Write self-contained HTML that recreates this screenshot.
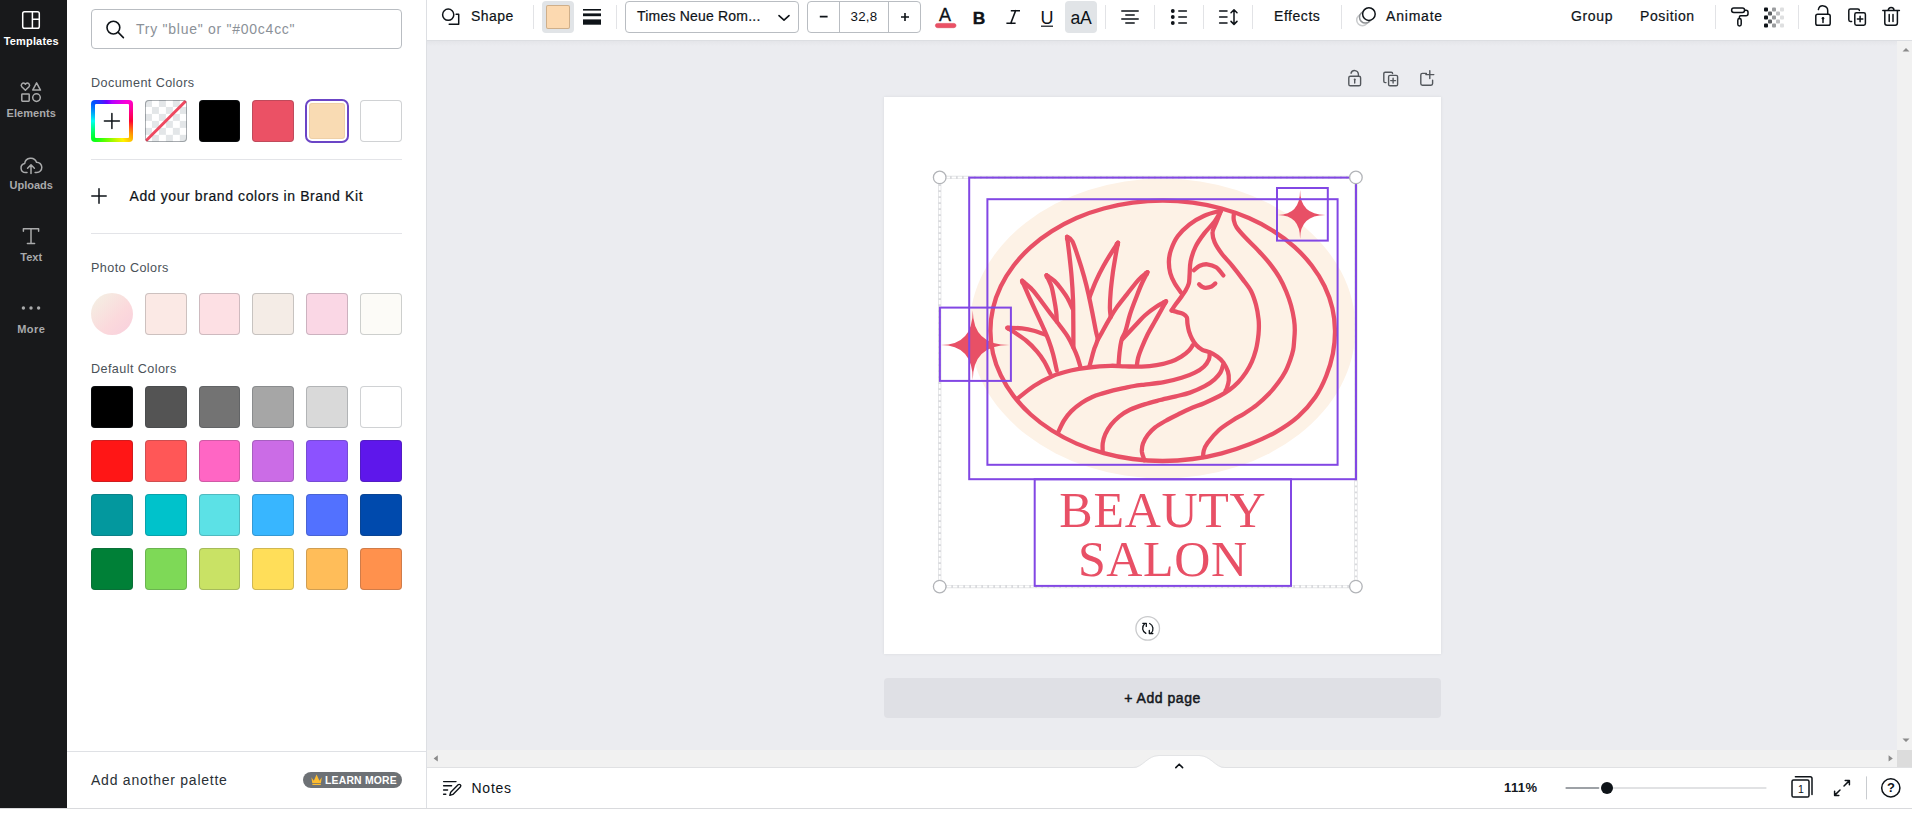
<!DOCTYPE html>
<html><head><meta charset="utf-8"><title>Beauty Salon Logo - Canva</title>
<style>
*{box-sizing:border-box;margin:0;padding:0}
html,body{width:1912px;height:813px;overflow:hidden;background:#fff;font-family:"Liberation Sans",sans-serif;color:#0e1318}
div,span,svg{position:absolute}
svg{overflow:visible}
#side{left:0;top:0;width:67px;height:808px;background:#18191b}
.sitem{left:0;width:62.5px;text-align:center;font-size:11px;line-height:14px;font-weight:bold;color:#a9aaab;white-space:nowrap}
.sitem.on{color:#fff}
#panel{left:67px;top:0;width:359px;height:808px;background:#fff}
.lbl{left:91px;font-size:12.6px;line-height:16px;color:#4a5158;white-space:nowrap;letter-spacing:.42px}
.sw{width:41.83px;height:41.83px;border-radius:4px;box-shadow:inset 0 0 0 1px rgba(40,50,60,.22)}
.hr{left:91px;width:311px;height:1px;background:#e3e4e8}
#toolbar{left:427px;top:0;width:1485px;height:40px;background:#fff}
.tb{font-size:14px;line-height:18px;color:#0e1318;top:7px;white-space:nowrap;-webkit-text-stroke:.2px #0e1318}
.vsep{top:5px;width:1px;height:24px;background:#e2e3e6}
#bottom{left:427px;top:768px;width:1485px;height:40px;background:#fff}
.pl{stroke:#8247e4;stroke-width:2;fill:none}
</style></head><body>

<div id="side"></div>
<div id="panel"></div>
<div style="left:426px;top:0;width:1px;height:808px;background:#dddfe3"></div>
<div style="left:0;top:808px;width:1912px;height:1px;background:#d9dadd"></div>
<div class="sitem on" style="top:34px;letter-spacing:0.18px">Templates</div>
<div class="sitem " style="top:106px;letter-spacing:0.05px">Elements</div>
<div class="sitem " style="top:178px;letter-spacing:0.02px">Uploads</div>
<div class="sitem " style="top:250px;letter-spacing:0.06px">Text</div>
<div class="sitem " style="top:322px;letter-spacing:0.44px">More</div>
<svg style="left:0;top:0" width="67" height="340">
<g stroke="#fff" stroke-width="1.5" fill="none"><rect x="22.7" y="11.7" width="16.6" height="16.6" rx="1.8"/><path d="M32.4 11.7v16.6M32.4 19.2h6.9"/></g>
<g stroke="#a9aaab" stroke-width="1.5" fill="none" stroke-linecap="round" stroke-linejoin="round"><path d="M25.4 90.3l-3.6-3.6a2.2 2.2 0 0 1 3.1-3.1l.5.5.5-.5a2.2 2.2 0 0 1 3.1 3.1z"/><path d="M36.6 82.9l3.9 7.2h-7.8z"/><rect x="21.8" y="94" width="7.4" height="7.2" rx=".6"/><circle cx="36.5" cy="97.6" r="3.8"/></g>
<g stroke="#a9aaab" stroke-width="1.5" fill="none" stroke-linecap="round" stroke-linejoin="round"><path d="M27 172.6h-1.4a4.6 4.6 0 0 1-.9-9.1 6.1 6.1 0 0 1 11.8-1.3 5.2 5.2 0 0 1 .2 10.4h-1.6"/><path d="M31 173.6v-8.6M27.6 168.2l3.4-3.4 3.4 3.4"/></g>
<g stroke="#a9aaab" stroke-width="1.5" fill="none" stroke-linecap="round" stroke-linejoin="round"><path d="M23.4 231.2v-2.4h15.2v2.4M31 228.8v14.6M27.4 243.4h7.2"/></g>
<g fill="#a9aaab"><circle cx="23.4" cy="308" r="1.7"/><circle cx="31" cy="308" r="1.7"/><circle cx="38.6" cy="308" r="1.7"/></g>
</svg>
<div style="left:91px;top:9px;width:311px;height:40px;border:1px solid #b9bdc2;border-radius:4px;background:#fff"></div>
<svg style="left:100px;top:14px" width="30" height="30"><g stroke="#0e1318" stroke-width="1.6" fill="none" stroke-linecap="round"><circle cx="13.4" cy="13.6" r="6.4"/><path d="M18.2 18.4l5.2 5.2"/></g></svg>
<div style="left:136px;top:20px;font-size:14px;line-height:18px;color:#8b9198;white-space:nowrap;letter-spacing:.74px">Try "blue" or "#00c4cc"</div>
<div class="lbl" style="top:75px">Document Colors</div>
<div class="sw" style="left:91.00px;top:100px;box-shadow:none;background:conic-gradient(from 0deg at 50% 50%,#b300ff 0deg,#ff00d4 40deg,#ff0033 90deg,#ff9d00 125deg,#fff200 150deg,#5eff00 200deg,#00ff1e 225deg,#00fff2 270deg,#0051ff 315deg,#6a00ff 345deg,#b300ff 360deg)"></div>
<div style="left:94.6px;top:103.6px;width:34.63px;height:34.63px;background:#fff;border-radius:1px"></div>
<svg style="left:91.00px;top:100px" width="42" height="42"><path d="M20.9 13.4v15M13.4 20.9h15" stroke="#0e1318" stroke-width="1.5" stroke-linecap="round"/></svg>
<div class="sw" style="left:144.83px;top:100px;overflow:hidden;background:repeating-conic-gradient(#fff 0% 25%,#e3e6e8 0% 50%) 0 0/13.94px 13.94px"><svg style="left:0;top:0" width="42" height="42"><path d="M1 40.8L40.8 1" stroke="#ee4960" stroke-width="3" stroke-linecap="round"/></svg></div>
<div class="sw" style="left:144.83px;top:100px;background:none"></div>
<div class="sw" style="left:198.66px;top:100px;background:#000"></div>
<div class="sw" style="left:252.49px;top:100px;background:#eb5165"></div>
<div style="left:305px;top:99px;width:44px;height:44px;border:2px solid #6b45c6;border-radius:7px"></div>
<div style="left:309px;top:103px;width:36px;height:36px;border-radius:3px;background:#f9dbb3;box-shadow:inset 0 0 0 1px rgba(120,90,40,.08)"></div>
<div class="sw" style="left:360.15px;top:100px;background:#fff"></div>
<div class="hr" style="top:159px"></div>
<svg style="left:91px;top:188px" width="16" height="16"><path d="M8 .8v14.4M.8 8h14.4" stroke="#0e1318" stroke-width="1.5" stroke-linecap="round"/></svg>
<div style="left:129.5px;top:187px;font-size:14px;line-height:18px;color:#0e1318;white-space:nowrap;letter-spacing:.6px;-webkit-text-stroke:.2px #0e1318">Add your brand colors in Brand Kit</div>
<div class="hr" style="top:233px"></div>
<div class="lbl" style="top:260px">Photo Colors</div>
<div style="left:91.00px;top:293px;width:41.83px;height:41.83px;border-radius:50%;background:linear-gradient(135deg,#f5ece2 15%,#fbd9dc 60%,#f8cfdd 100%)"></div>
<div class="sw" style="left:144.83px;top:293px;background:#fbe9e5"></div>
<div class="sw" style="left:198.66px;top:293px;background:#fde0e4"></div>
<div class="sw" style="left:252.49px;top:293px;background:#f4ece6"></div>
<div class="sw" style="left:306.32px;top:293px;background:#fad7e5"></div>
<div class="sw" style="left:360.15px;top:293px;background:#fcfbf7"></div>
<div class="lbl" style="top:361px">Default Colors</div>
<div class="sw" style="left:91.00px;top:386px;background:#000000"></div>
<div class="sw" style="left:144.83px;top:386px;background:#545454"></div>
<div class="sw" style="left:198.66px;top:386px;background:#737373"></div>
<div class="sw" style="left:252.49px;top:386px;background:#a6a6a6"></div>
<div class="sw" style="left:306.32px;top:386px;background:#d9d9d9"></div>
<div class="sw" style="left:360.15px;top:386px;background:#ffffff"></div>
<div class="sw" style="left:91.00px;top:440px;background:#ff1616"></div>
<div class="sw" style="left:144.83px;top:440px;background:#ff5757"></div>
<div class="sw" style="left:198.66px;top:440px;background:#ff66c4"></div>
<div class="sw" style="left:252.49px;top:440px;background:#cb6ce6"></div>
<div class="sw" style="left:306.32px;top:440px;background:#8c52ff"></div>
<div class="sw" style="left:360.15px;top:440px;background:#5e17eb"></div>
<div class="sw" style="left:91.00px;top:494px;background:#03989e"></div>
<div class="sw" style="left:144.83px;top:494px;background:#00c2cb"></div>
<div class="sw" style="left:198.66px;top:494px;background:#5ce1e6"></div>
<div class="sw" style="left:252.49px;top:494px;background:#38b6ff"></div>
<div class="sw" style="left:306.32px;top:494px;background:#5271ff"></div>
<div class="sw" style="left:360.15px;top:494px;background:#004aad"></div>
<div class="sw" style="left:91.00px;top:548px;background:#008037"></div>
<div class="sw" style="left:144.83px;top:548px;background:#7ed957"></div>
<div class="sw" style="left:198.66px;top:548px;background:#c9e265"></div>
<div class="sw" style="left:252.49px;top:548px;background:#ffde59"></div>
<div class="sw" style="left:306.32px;top:548px;background:#ffbd59"></div>
<div class="sw" style="left:360.15px;top:548px;background:#ff914d"></div>
<div style="left:67px;top:751px;width:359px;height:1px;background:#dfe1e5"></div>
<div style="left:91px;top:771px;font-size:14px;line-height:18px;color:#2a3036;white-space:nowrap;letter-spacing:.76px">Add another palette</div>
<div style="left:303px;top:772px;width:99px;height:16px;border-radius:8px;background:#6d7175"></div>
<svg style="left:311px;top:774px" width="12" height="12"><path d="M.4 3.2l2.4 3.6L5.6.6l2.8 6.2 2.4-3.6-.9 6H1.3z M1.4 10.1h8.4v1H1.4z" fill="#fdbc2f"/></svg>
<div style="left:325px;top:773.5px;font-size:10.4px;line-height:14px;font-weight:bold;color:#fff;white-space:nowrap;letter-spacing:.2px">LEARN MORE</div>
<div id="toolbar"></div>
<div style="left:427px;top:40px;width:1485px;height:1px;background:#dcdee2"></div>
<svg style="left:427px;top:0" width="1485" height="40"><g stroke="#0e1318" stroke-width="1.5" fill="none" stroke-linecap="round" stroke-linejoin="round">
<circle cx="21.2" cy="14.7" r="5.6"/><path d="M22.2 24.3h9.5v-10h-2.6"/>
</g>
<g fill="#0e1318"><rect x="156" y="9" width="18" height="1.6"/><rect x="156" y="13.4" width="18" height="2.8"/><rect x="156" y="19.4" width="18" height="5.3"/></g>
<path d="M352 15.6l5 4.6 5-4.6" stroke="#0e1318" stroke-width="1.6" fill="none" stroke-linecap="round" stroke-linejoin="round"/>
<path d="M392.8 16.6h7.8M474 17h8M478 13v8" stroke="#0e1318" stroke-width="1.6" fill="none"/>
<rect x="508.4" y="23.4" width="20.6" height="4.3" rx="2.15" fill="#eb5165" stroke="#d9475b" stroke-width=".6"/>
<path d="M614 26.2h12" stroke="#0e1318" stroke-width="1.2"/>
<g stroke="#0e1318" stroke-width="1.5" stroke-linecap="round"><path d="M694.8 11h16.4M698.8 15h8.4M694.8 19h16.4M698.8 23h8.4"/>
<path d="M751.8 11h7.6M751.8 17h7.6M751.8 23h7.6"/>
<path d="M792.6 11h7.4M792.6 17h7.4M792.6 23h7.4"/><path d="M807 10.2v13.8M804 12.8l3-3 3 3M804 21.4l3 3 3-3" fill="none" stroke-linejoin="round"/></g>
<g fill="#0e1318"><circle cx="745.8" cy="11" r="1.9"/><circle cx="745.8" cy="17" r="1.9"/><circle cx="745.8" cy="23" r="1.9"/></g>
<g fill="#fff" stroke-width="1.5"><circle cx="935.4" cy="20" r="5.7" stroke="#c9cbcd"/><circle cx="938.4" cy="17.2" r="5.9" stroke="#8d9093"/><circle cx="941.9" cy="14.1" r="6.3" stroke="#0e1318"/></g>
<g stroke="#0e1318" stroke-width="1.5" fill="none" stroke-linejoin="round" stroke-linecap="round"><rect x="1304.6" y="8" width="13" height="4.4" rx="2.2"/><path d="M1317.6 10.2h1.4a2 2 0 0 1 2 2v1.6a2 2 0 0 1-2 2h-5.4a1.2 1.2 0 0 0-1.2 1.2v1.4"/><rect x="1310.8" y="18.6" width="3.4" height="7.4" rx="1.7"/></g>
<rect x="1337.0" y="7.4" width="4" height="4" rx="1" fill="#0e1318"/>
<rect x="1337.0" y="15.4" width="4" height="4" rx="1" fill="#0e1318"/>
<rect x="1337.0" y="23.4" width="4" height="4" rx="1" fill="#0e1318"/>
<rect x="1341.0" y="11.4" width="4" height="4" rx="1" fill="#5b5e61"/>
<rect x="1341.0" y="19.4" width="4" height="4" rx="1" fill="#5b5e61"/>
<rect x="1345.0" y="7.4" width="4" height="4" rx="1" fill="#9a9c9e"/>
<rect x="1345.0" y="15.4" width="4" height="4" rx="1" fill="#9a9c9e"/>
<rect x="1345.0" y="23.4" width="4" height="4" rx="1" fill="#9a9c9e"/>
<rect x="1349.0" y="11.4" width="4" height="4" rx="1" fill="#bfc0c2"/>
<rect x="1349.0" y="19.4" width="4" height="4" rx="1" fill="#bfc0c2"/>
<rect x="1353.0" y="7.4" width="4" height="4" rx="1" fill="#dedfe0"/>
<rect x="1353.0" y="15.4" width="4" height="4" rx="1" fill="#dedfe0"/>
<rect x="1353.0" y="23.4" width="4" height="4" rx="1" fill="#dedfe0"/>
<g stroke="#0e1318" stroke-width="1.5" fill="none" stroke-linejoin="round" stroke-linecap="round"><rect x="1388.8" y="14.2" width="14.4" height="11" rx="1.8"/><path d="M1391.4 9.6a4.7 4.7 0 0 1 9.3 1v3.4"/><path d="M1396 18.4v4"/></g><circle cx="1396" cy="18.2" r="1.3" fill="#0e1318"/>
<g stroke="#0e1318" stroke-width="1.5" fill="none" stroke-linejoin="round" stroke-linecap="round"><rect x="1427.8" y="12.8" width="10.6" height="12.4" rx="1.6"/><path d="M1424.6 21.4h-1.2a1.6 1.6 0 0 1-1.6-1.6v-9.2a1.6 1.6 0 0 1 1.6-1.6h7.4a1.6 1.6 0 0 1 1.6 1.6"/><path d="M1430.4 19h5.4M1433.1 16.3v5.4"/></g>
<g stroke="#0e1318" stroke-width="1.5" fill="none" stroke-linejoin="round" stroke-linecap="round"><path d="M1455.8 10.6h16.6M1461.2 10.4a2.9 2.9 0 0 1 5.8 0M1457.8 10.8v12.2a2.2 2.2 0 0 0 2.2 2.2h8.2a2.2 2.2 0 0 0 2.2-2.2v-12.2M1462.2 14.4v7M1466 14.4v7"/></g>
</svg>
<div class="tb" style="left:471px;letter-spacing:.42px">Shape</div>
<div class="vsep" style="left:533px"></div>
<div class="vsep" style="left:616px"></div>
<div class="vsep" style="left:1105px"></div>
<div class="vsep" style="left:1154px"></div>
<div class="vsep" style="left:1203px"></div>
<div class="vsep" style="left:1252px"></div>
<div class="vsep" style="left:1341px"></div>
<div class="vsep" style="left:1715px"></div>
<div class="vsep" style="left:1798px"></div>
<div style="left:542px;top:1px;width:32px;height:32px;border-radius:4px;background:#e1e4e7"></div>
<div style="left:546px;top:5px;width:24px;height:24px;border-radius:2px;background:#fcd9b0;box-shadow:inset 0 0 0 1px rgba(90,70,40,.28)"></div>
<div style="left:625px;top:1px;width:174px;height:32px;border:1px solid #b9bdc2;border-radius:4px"></div>
<div class="tb" style="left:637px;letter-spacing:.2px">Times Neue Rom...</div>
<div style="left:807px;top:1px;width:114px;height:32px;border:1px solid #b9bdc2;border-radius:4px"></div>
<div style="left:839px;top:2px;width:1px;height:30px;background:#b9bdc2"></div><div style="left:888px;top:2px;width:1px;height:30px;background:#b9bdc2"></div>
<div style="left:840px;top:8.5px;width:48px;text-align:center;font-size:13.33px;line-height:16px;letter-spacing:.3px">32,8</div>
<div style="left:935.5px;top:3.5px;width:19px;text-align:center;font-size:18px;line-height:22px;-webkit-text-stroke:.3px #0e1318">A</div>
<div style="left:972px;top:6.6px;width:14px;text-align:center;font-size:17.4px;line-height:22px;font-weight:bold;-webkit-text-stroke:.4px #0e1318">B</div>
<svg style="left:1004px;top:0" width="20" height="34"><path d="M7.6 10.8h7.6M3.2 23.2h7.6M11.6 10.8L6.8 23.2" stroke="#0e1318" stroke-width="1.6" fill="none" stroke-linecap="square"/></svg>
<div style="left:1038px;top:6.5px;width:18px;text-align:center;font-size:18px;line-height:22px">U</div>
<div style="left:1065px;top:1px;width:32px;height:32px;border-radius:4px;background:#e1e4e7"></div>
<div style="left:1065px;top:6.6px;width:32px;text-align:center;font-size:17.6px;line-height:22px;letter-spacing:-.3px">aA</div>
<div class="tb" style="left:1274px;letter-spacing:.55px">Effects</div>
<div class="tb" style="left:1386px;letter-spacing:.8px">Animate</div>
<div class="tb" style="left:1571px;letter-spacing:.65px">Group</div>
<div class="tb" style="left:1640px;letter-spacing:.62px">Position</div>
<div style="left:427px;top:41px;width:1470px;height:709px;background:#ebecf0"></div>
<div style="left:427px;top:41px;width:1470px;height:5px;background:linear-gradient(#e4e5e9,#ebecf0)"></div>
<div style="left:1897px;top:41px;width:15px;height:709px;background:#f1f1f1"></div>
<svg style="left:1897px;top:41px" width="15" height="709"><path d="M5.5 10.6l3.5-3.6 3.5 3.6z M5.5 697.4l3.5 3.6 3.5-3.6z" fill="#8a8a8a"/></svg>
<div style="left:884px;top:97px;width:557px;height:557px;background:#fff;box-shadow:0 0 3px rgba(60,64,72,.10)"></div>
<svg style="left:1340px;top:64px" width="104" height="28"><g stroke="#53575c" stroke-width="1.4" fill="none" stroke-linejoin="round" stroke-linecap="round">
<rect x="8.8" y="12.2" width="11.8" height="9.6" rx="1.6"/><path d="M11 9.2a3.8 3.8 0 0 1 7.4.8v2.2"/><path d="M14.7 15.6v3.4"/>
<rect x="48.6" y="11.4" width="9" height="10.4" rx="1.4"/><path d="M46 18.6h-.8a1.4 1.4 0 0 1-1.4-1.4v-7.6a1.4 1.4 0 0 1 1.4-1.4h6a1.4 1.4 0 0 1 1.4 1.4"/><path d="M50.7 16.6h4.8M53.1 14.2v4.8"/>
<path d="M86.4 9.4h-4a1.6 1.6 0 0 0-1.6 1.6v8.6a1.6 1.6 0 0 0 1.6 1.6h8.6a1.6 1.6 0 0 0 1.6-1.6v-3.4M85.8 10.6h8M89.8 6.6v8"/>
</g><circle cx="14.7" cy="15.6" r="1" fill="#53575c"/></svg>
<div style="left:884px;top:678px;width:557px;height:40px;border-radius:4px;background:#dfe0e5"></div>
<div style="left:884px;top:689px;width:557px;text-align:center;font-size:14px;line-height:18px;letter-spacing:.55px;-webkit-text-stroke:.5px #14181d;color:#14181d">+ Add page</div>
<svg style="left:0;top:0" width="1912" height="813" viewBox="0 0 1912 813">
<ellipse cx="1162.5" cy="328.5" rx="193" ry="150" fill="#fdf2e6"/>
<g fill="none" stroke="#e85066" stroke-width="4.3" stroke-linecap="round" stroke-linejoin="round"><path d="M1335.0 330.8C1335.1 338.3 1334.3 346.0 1332.9 353.5C1331.4 361.0 1329.3 368.5 1326.3 375.8C1323.4 383.1 1319.9 390.5 1315.2 397.3C1310.5 404.1 1304.7 410.8 1298.1 416.6C1291.5 422.5 1283.5 427.7 1275.4 432.3C1267.3 436.9 1258.4 440.8 1249.4 444.3C1240.5 447.8 1231.2 450.9 1221.7 453.3C1212.3 455.8 1202.5 457.8 1192.6 459.0C1182.8 460.3 1172.7 461.0 1162.7 461.0C1152.7 461.0 1142.6 460.3 1132.8 459.0C1123.0 457.7 1113.1 455.7 1103.8 453.1C1094.4 450.6 1085.2 447.3 1076.6 443.6C1067.9 439.8 1059.6 435.4 1051.9 430.5C1044.3 425.7 1037.1 420.3 1030.7 414.5C1024.3 408.7 1018.5 402.4 1013.5 395.9C1008.5 389.4 1004.2 382.4 1000.8 375.3C997.4 368.2 994.7 360.8 993.0 353.4C991.3 346.0 990.4 338.3 990.4 330.8C990.4 323.3 991.3 315.6 993.0 308.2C994.7 300.8 997.4 293.4 1000.8 286.3C1004.2 279.2 1008.5 272.2 1013.5 265.7C1018.5 259.2 1024.3 252.9 1030.7 247.1C1037.1 241.3 1044.3 235.9 1051.9 231.1C1059.6 226.2 1067.9 221.8 1076.5 218.0C1085.2 214.3 1094.4 211.0 1103.8 208.5C1113.1 205.9 1123.0 203.9 1132.8 202.6C1142.6 201.3 1152.7 200.6 1162.7 200.6C1172.7 200.6 1182.8 201.3 1192.6 202.6C1202.4 203.9 1212.3 205.9 1221.6 208.5C1231.0 211.0 1240.2 214.3 1248.9 218.0C1257.5 221.8 1265.8 226.2 1273.5 231.1C1281.1 235.9 1288.3 241.3 1294.7 247.1C1301.1 252.9 1306.9 259.2 1311.9 265.7C1316.9 272.2 1321.2 279.2 1324.6 286.3C1328.0 293.4 1330.7 300.8 1332.4 308.2C1334.1 315.6 1334.9 323.3 1335.0 330.8z"/><path d="M1221.0 210.6C1218.2 211.4 1209.5 213.4 1204.3 215.7C1199.0 218.0 1193.9 221.1 1189.5 224.5C1185.1 227.9 1180.8 232.1 1177.7 236.3C1174.6 240.5 1172.6 245.4 1171.1 249.6C1169.6 253.8 1169.0 257.5 1168.9 261.4C1168.8 265.3 1169.3 269.5 1170.3 273.2C1171.3 276.9 1172.9 280.2 1174.8 283.5C1176.7 286.8 1180.3 291.5 1181.4 293.1"/><path d="M1221.0 210.6C1219.9 212.4 1217.4 217.8 1214.6 221.6C1211.8 225.4 1207.5 229.2 1204.3 233.4C1201.1 237.6 1197.9 241.9 1195.6 246.6C1193.3 251.3 1191.6 256.7 1190.6 261.4C1189.6 266.1 1189.9 271.0 1189.6 274.7C1189.3 278.4 1189.5 280.9 1188.8 283.5C1188.1 286.1 1186.8 288.4 1185.6 290.5C1184.4 292.6 1183.2 294.1 1181.6 296.4C1179.9 298.7 1177.4 302.0 1175.7 304.3C1174.0 306.6 1172.3 309.4 1171.6 310.4"/><path d="M1171.6 310.4C1172.5 310.7 1175.3 311.5 1177.2 312.1C1179.1 312.7 1181.5 313.0 1183.1 313.9C1184.7 314.8 1186.1 315.6 1186.8 317.3C1187.5 319.0 1187.1 321.6 1187.5 323.9C1187.9 326.2 1188.2 328.8 1189.0 331.3C1189.8 333.8 1190.8 336.4 1192.0 338.7C1193.2 341.0 1194.7 343.4 1196.4 345.3C1198.1 347.2 1200.1 348.6 1202.3 349.8C1204.5 351.0 1207.2 351.2 1209.7 352.3C1212.2 353.4 1215.2 355.0 1217.5 356.7C1219.8 358.4 1221.7 360.1 1223.4 362.6C1225.1 365.1 1227.0 368.6 1227.9 371.5C1228.8 374.4 1229.0 377.5 1228.8 380.3C1228.6 383.1 1227.5 386.4 1226.9 388.2C1226.3 390.0 1225.7 390.5 1225.4 391.0"/><path d="M1193.9 270.2C1194.9 269.5 1197.6 266.8 1199.8 265.8C1202.0 264.8 1204.5 264.1 1207.2 264.3C1209.9 264.6 1213.4 265.5 1216.1 267.3C1218.8 269.1 1222.2 274.0 1223.4 275.4"/><path d="M1199.1 284.3C1199.6 284.7 1201.1 286.2 1202.2 286.8C1203.3 287.4 1204.1 287.9 1205.7 287.9C1207.3 287.8 1210.0 287.2 1211.6 286.5C1213.2 285.8 1214.7 284.0 1215.3 283.5"/><path d="M1221.0 210.6C1220.2 212.7 1217.5 219.4 1216.1 223.0C1214.7 226.6 1212.8 228.7 1212.6 231.9C1212.3 235.1 1213.0 238.5 1214.6 242.2C1216.2 245.9 1219.0 250.1 1222.0 254.0C1225.0 257.9 1228.9 261.6 1232.3 265.8C1235.7 270.0 1239.5 274.9 1242.6 279.1C1245.7 283.3 1248.8 286.7 1251.0 291.0C1253.2 295.3 1254.7 300.1 1256.0 304.8C1257.3 309.6 1258.1 315.3 1258.6 319.5C1259.1 323.7 1258.9 326.6 1258.8 330.0C1258.7 333.4 1258.3 336.7 1257.8 340.0C1257.3 343.3 1256.9 346.2 1255.9 349.8C1254.9 353.4 1253.6 357.8 1251.9 361.6C1250.2 365.4 1248.3 368.9 1246.0 372.4C1243.7 375.8 1241.0 379.4 1238.2 382.3C1235.4 385.2 1232.4 387.8 1229.3 390.1C1226.2 392.4 1223.6 393.9 1219.5 396.0C1215.4 398.1 1209.6 400.8 1204.7 402.9C1199.8 405.0 1194.5 406.9 1190.0 408.8C1185.5 410.7 1182.1 412.5 1178.0 414.5C1173.9 416.5 1169.2 418.8 1165.4 421.0C1161.6 423.2 1158.0 425.2 1155.0 427.5C1152.0 429.8 1149.7 432.3 1147.7 435.0C1145.7 437.7 1144.0 440.7 1143.0 443.5C1142.0 446.3 1141.7 449.1 1141.9 451.9C1142.2 454.7 1144.1 458.9 1144.5 460.3"/><path d="M1233.8 214.4C1233.8 215.3 1233.3 217.9 1233.8 220.1C1234.3 222.3 1234.7 224.6 1236.7 227.5C1238.7 230.4 1242.1 234.1 1245.6 237.8C1249.0 241.5 1253.5 245.4 1257.4 249.6C1261.3 253.8 1265.5 258.2 1269.2 262.9C1272.9 267.6 1276.7 272.8 1279.5 277.6C1282.3 282.4 1284.3 286.9 1286.2 291.5C1288.1 296.1 1289.7 300.5 1291.0 305.2C1292.3 309.9 1293.4 315.4 1294.0 319.5C1294.6 323.6 1294.8 326.6 1294.8 330.0C1294.8 333.4 1294.5 336.7 1294.2 340.0C1293.9 343.3 1293.9 346.5 1293.2 349.8C1292.5 353.1 1291.6 356.1 1290.3 359.7C1289.0 363.3 1287.4 367.7 1285.4 371.5C1283.4 375.3 1281.3 378.5 1278.5 382.3C1275.7 386.1 1272.3 390.3 1268.7 394.1C1265.1 397.9 1261.0 401.6 1256.9 404.9C1252.8 408.2 1248.0 411.2 1244.1 413.7C1240.2 416.2 1237.5 417.3 1233.3 420.0C1229.1 422.7 1223.3 426.2 1219.0 430.0C1214.7 433.8 1210.0 439.6 1207.5 443.0C1205.0 446.4 1204.5 448.1 1203.8 450.5C1203.1 452.9 1203.2 456.0 1203.1 457.1"/><path d="M1192.7 345.3C1192.1 346.2 1190.8 348.6 1189.0 350.5C1187.2 352.4 1184.5 354.5 1181.6 356.4C1178.6 358.2 1175.5 360.1 1171.3 361.6C1167.1 363.1 1161.5 364.4 1156.6 365.2C1151.7 366.0 1147.1 366.4 1141.8 366.6C1136.5 366.8 1130.2 366.5 1125.0 366.4C1119.8 366.3 1116.8 365.6 1110.7 365.8C1104.6 366.0 1095.2 366.7 1088.5 367.5C1081.8 368.3 1077.0 369.0 1070.8 370.5C1064.6 372.0 1057.8 373.8 1051.6 376.4C1045.4 379.0 1039.6 382.3 1033.9 386.0C1028.2 389.7 1020.4 396.4 1017.7 398.5"/><path d="M1209.7 352.7C1209.6 353.8 1209.9 357.0 1208.9 359.3C1207.9 361.6 1206.1 364.5 1203.8 366.7C1201.5 368.9 1198.6 370.8 1194.9 372.6C1191.2 374.5 1186.8 376.2 1181.6 377.8C1176.4 379.4 1170.0 381.1 1163.9 382.2C1157.8 383.3 1149.8 384.0 1144.8 384.6C1139.8 385.2 1137.6 385.4 1134.1 386.0C1130.6 386.6 1127.1 387.4 1123.6 388.1C1120.1 388.8 1116.7 389.5 1113.2 390.4C1109.7 391.3 1106.2 392.3 1102.7 393.4C1099.2 394.5 1095.8 395.4 1092.3 397.0C1088.8 398.6 1085.3 400.4 1081.8 402.8C1078.3 405.2 1074.4 408.2 1071.4 411.1C1068.4 414.1 1066.3 416.8 1064.0 420.5C1061.7 424.2 1058.8 431.0 1057.8 433.1"/><path d="M1223.2 364.6C1222.8 365.9 1221.9 369.9 1220.5 372.4C1219.1 374.8 1217.2 377.0 1214.6 379.3C1212.0 381.6 1208.8 384.0 1204.7 386.2C1200.6 388.4 1194.8 390.9 1190.0 392.6C1185.2 394.3 1180.9 395.1 1175.9 396.3C1170.9 397.5 1165.4 398.6 1160.2 400.0C1155.0 401.4 1149.5 402.8 1144.5 404.4C1139.5 406.0 1134.1 407.8 1129.9 409.8C1125.7 411.8 1122.5 413.9 1119.4 416.4C1116.3 418.9 1113.4 421.8 1111.1 424.7C1108.8 427.6 1106.7 431.0 1105.3 434.1C1103.9 437.2 1103.1 440.5 1102.7 443.5C1102.3 446.5 1102.7 450.5 1102.7 451.9"/><path d="M1007.4 327.8C1009.9 327.9 1017.7 327.9 1022.1 328.4C1026.5 328.9 1030.0 329.6 1033.9 330.7C1037.9 331.8 1043.8 334.1 1045.8 334.8"/><path d="M1007.4 327.8C1008.6 328.6 1011.6 330.4 1014.8 332.6C1018.0 334.8 1022.9 337.9 1026.6 341.0C1030.3 344.1 1034.0 347.9 1036.9 351.3C1039.9 354.7 1042.1 357.9 1044.3 361.6C1046.5 365.3 1049.2 371.4 1050.2 373.4"/><path d="M1022.1 280.8C1023.1 283.1 1025.8 289.3 1028.0 294.3C1030.2 299.3 1032.9 305.2 1035.4 310.6C1037.9 316.0 1040.6 321.5 1042.8 326.5C1045.0 331.5 1047.0 335.9 1048.7 340.5C1050.4 345.1 1051.8 349.3 1053.1 354.3C1054.4 359.3 1056.2 367.8 1056.8 370.5"/><path d="M1022.1 280.8C1023.8 282.3 1029.0 286.2 1032.5 289.9C1036.0 293.6 1039.6 299.0 1042.8 303.2C1046.0 307.4 1048.9 311.4 1051.6 315.0C1054.3 318.6 1056.3 320.9 1059.0 324.5C1061.7 328.1 1065.4 332.8 1067.9 336.8C1070.4 340.8 1072.2 345.0 1073.8 348.4C1075.4 351.8 1076.4 354.1 1077.5 357.2C1078.6 360.3 1079.9 365.2 1080.4 366.8"/><path d="M1046.5 275.2C1047.3 277.2 1050.2 282.6 1051.6 287.0C1052.9 291.4 1053.8 297.5 1054.6 301.7C1055.4 305.9 1055.8 308.7 1056.2 312.0C1056.6 315.3 1056.7 320.0 1056.8 321.6"/><path d="M1046.5 275.2C1047.8 276.2 1052.0 278.7 1054.6 281.1C1057.2 283.6 1059.8 286.9 1062.0 289.9C1064.2 292.8 1066.2 295.7 1067.9 298.8C1069.7 301.9 1071.7 306.9 1072.5 308.5"/><path d="M1067.1 236.8C1067.5 239.8 1068.5 247.9 1069.3 254.5C1070.0 261.1 1071.0 269.2 1071.6 276.6C1072.2 284.0 1072.7 291.4 1073.0 298.8C1073.3 306.2 1073.2 312.8 1073.3 320.9C1073.4 329.0 1073.4 343.0 1073.4 347.4"/><path d="M1067.1 236.8C1068.0 237.5 1070.4 237.8 1072.3 241.2C1074.2 244.6 1076.2 251.6 1078.2 257.5C1080.2 263.4 1082.4 270.5 1084.1 276.6C1085.8 282.7 1087.2 288.4 1088.5 294.3C1089.8 300.2 1091.0 305.9 1092.2 312.0C1093.4 318.1 1095.0 326.6 1095.9 331.2C1096.8 335.8 1097.8 336.6 1097.6 339.5C1097.3 342.4 1095.4 345.2 1094.4 348.4C1093.4 351.6 1092.3 355.6 1091.5 358.7C1090.7 361.8 1089.7 365.4 1089.3 366.8"/><path d="M1118.0 242.7C1117.0 244.2 1114.5 247.7 1112.1 251.6C1109.6 255.5 1106.0 261.4 1103.3 266.3C1100.6 271.2 1098.2 276.0 1095.9 281.1C1093.6 286.2 1090.6 294.4 1089.6 297.0"/><path d="M1118.0 242.7C1117.6 244.7 1116.6 249.6 1115.8 254.5C1115.0 259.4 1113.8 266.1 1112.9 272.2C1112.1 278.3 1111.2 285.5 1110.7 291.4C1110.2 297.3 1109.9 303.3 1109.9 307.6C1109.9 311.9 1110.6 315.4 1110.7 317.0"/><path d="M1147.5 272.2C1146.0 273.4 1142.1 275.9 1138.7 279.6C1135.3 283.3 1130.6 289.6 1126.9 294.3C1123.2 299.0 1119.5 303.4 1116.6 307.6C1113.6 311.8 1111.7 315.2 1109.2 319.4C1106.7 323.6 1103.7 329.3 1101.8 332.7C1099.9 336.1 1098.3 338.8 1097.6 340.0"/><path d="M1147.5 272.2C1146.5 274.2 1143.6 279.6 1141.6 284.0C1139.6 288.4 1137.7 293.6 1135.7 298.8C1133.7 304.0 1131.5 309.6 1129.8 315.0C1128.1 320.4 1126.8 327.1 1125.4 331.2C1124.1 335.3 1122.7 335.9 1121.7 339.5C1120.7 343.1 1120.0 348.4 1119.5 352.8C1119.0 357.2 1118.7 363.5 1118.5 365.6"/><path d="M1166.1 301.3C1164.5 302.2 1160.1 304.2 1156.6 306.6C1153.0 309.0 1148.3 312.4 1144.8 315.5C1141.3 318.6 1139.4 321.1 1135.7 325.0C1132.0 328.9 1124.7 336.7 1122.5 339.0"/><path d="M1166.1 301.3C1165.4 302.6 1163.5 305.9 1161.7 309.2C1159.9 312.5 1157.4 316.8 1155.1 321.0C1152.8 325.2 1149.9 329.9 1147.7 334.3C1145.5 338.7 1143.4 343.6 1141.8 347.5C1140.2 351.4 1138.9 354.8 1138.1 357.9C1137.3 361.0 1137.0 364.6 1136.8 365.9"/></g><g fill="#e85066"><circle cx="1008.8" cy="328.3" r="2.7"/><circle cx="1023" cy="282.2" r="2.7"/><circle cx="1047.3" cy="276.5" r="2.7"/><circle cx="1067.6" cy="238.6" r="2.7"/><circle cx="1117.3" cy="244.2" r="2.7"/><circle cx="1146.4" cy="273.4" r="2.7"/><circle cx="1164.7" cy="302.4" r="2.7"/></g>
<path d="M972.8 310.20000000000005Q972.8 345.1 1009.4 345.1Q972.8 345.1 972.8 380.1Q972.8 345.1 940.8 345.1Q972.8 345.1 972.8 310.20000000000005z" fill="#e85066"/>
<path d="M1300.1 190.1Q1300.1 214.9 1325.3 214.9Q1300.1 214.9 1300.1 238.9Q1300.1 214.9 1277.8999999999999 214.9Q1300.1 214.9 1300.1 190.1z" fill="#e85066"/>
</svg>
<div style="left:1034px;top:485.5px;width:257px;text-align:center;font-family:'Liberation Serif',serif;font-size:50px;line-height:49px;color:#e85066;white-space:nowrap"><span style="position:static;letter-spacing:.7px;margin-left:.7px">BEAUTY</span><br><span style="position:static;letter-spacing:.6px;margin-left:.6px">SALON</span></div>
<svg style="left:0;top:0" width="1912" height="813" viewBox="0 0 1912 813">
<g fill="none"><rect x="939.7" y="177.4" width="416.2" height="409.2" stroke="#d9dadd" stroke-width="3.2"/><rect x="939.7" y="177.4" width="416.2" height="409.2" stroke="#fff" stroke-width="2" stroke-dasharray="4.3 1.7"/></g>
<g class="pl">
<rect x="969.2" y="177.6" width="386.8" height="301.6"/>
<rect x="987.4" y="199.2" width="350.2" height="265.6"/>
<rect x="1277" y="188" width="50.8" height="52.6"/>
<rect x="939.9" y="307.6" width="71" height="73.3"/>
<rect x="1034.7" y="479.3" width="256.3" height="106.6"/>
</g>
<circle cx="939.7" cy="177.4" r="6.3" fill="#fff" stroke="#b2b4b8" stroke-width="1.3"/>
<circle cx="1355.9" cy="177.4" r="6.3" fill="#fff" stroke="#b2b4b8" stroke-width="1.3"/>
<circle cx="939.7" cy="586.6" r="6.3" fill="#fff" stroke="#b2b4b8" stroke-width="1.3"/>
<circle cx="1355.9" cy="586.6" r="6.3" fill="#fff" stroke="#b2b4b8" stroke-width="1.3"/>
<circle cx="1147.7" cy="628.4" r="11.8" fill="#fff" stroke="#c9cacc" stroke-width="1.3"/>
<g stroke="#0e1318" stroke-width="1.3" fill="none" stroke-linecap="round" stroke-linejoin="round"><path d="M1145.9 633.3C1142.4 631.6 1141.3 626.8 1144.6 623.7M1149.7 623.5C1153.2 625.2 1154.3 630 1151 633.1"/><path d="M1142.8 623.3h3.5v3.1M1152.8 633.5h-3.5v-3.1"/></g>
</svg>
<div style="left:427px;top:750px;width:1470px;height:18px;background:#f1f1f1"></div>
<div style="left:1897px;top:750px;width:15px;height:18px;background:#dcdcdc"></div>
<div id="bottom"></div>
<div style="left:427px;top:767px;width:1485px;height:1px;background:#e0e1e3"></div>
<svg style="left:427px;top:745px" width="1485" height="64">
<path d="M6.6 13.4l4.2-3.2v6.4z M1465.8 13.4l-4.2-3.2v6.4z" fill="#8a8a8a"/>
<path d="M706 23c10 0 14-12 26-12h40c12 0 16 12 26 12z" fill="#fff"/><path d="M706 22.5c10 0 14-12 26-12h40c12 0 16 12 26 12" fill="none" stroke="#e3e4e6" stroke-width="1"/>
<path d="M748.8 22.6l3.4-3.4 3.4 3.4" stroke="#0e1318" stroke-width="1.6" fill="none" stroke-linecap="round" stroke-linejoin="round"/>
<g stroke="#0e1318" stroke-width="1.4" fill="none" stroke-linecap="round" stroke-linejoin="round"><path d="M16.6 36.6h12.4M16.6 40.8h8M16.6 45h4M16.6 49.2h2.2"/><path d="M22.8 50.4l.9-3.2 7.4-7.4a1.5 1.5 0 0 1 2.2 2.2l-7.4 7.4z"/></g>
<path d="M1139.4 42.9h32" stroke="#9da1a6" stroke-width="2" stroke-linecap="round"/><path d="M1186 42.9h152.6" stroke="#e1e2e4" stroke-width="2" stroke-linecap="round"/>
<circle cx="1180" cy="42.9" r="6" fill="#0e1318"/>
<g stroke="#0e1318" stroke-width="1.5" fill="none" stroke-linejoin="round" stroke-linecap="round"><rect x="1365" y="35" width="17" height="17" rx="1.6"/><path d="M1368.4 31.8h14.8a1.8 1.8 0 0 1 1.8 1.8v15.8"/></g>
<g stroke="#0e1318" stroke-width="1.5" fill="none" stroke-linejoin="round" stroke-linecap="round"><path d="M1417 41l5.4-5.4M1418.2 35.6h4.2v4.2M1413 45l-5.4 5.4M1411.8 50.4h-4.2v-4.2"/></g>
<path d="M1439.5 31.4v23" stroke="#c9ccd0" stroke-width="1"/>
<circle cx="1463.8" cy="42.9" r="9.1" stroke="#0e1318" stroke-width="1.5" fill="none"/>
</svg>
<div style="left:471.5px;top:779px;font-size:14px;line-height:18px;letter-spacing:.75px;white-space:nowrap">Notes</div>
<div style="left:1504px;top:779.5px;font-size:13px;line-height:16px;font-weight:bold;letter-spacing:.4px;white-space:nowrap;color:#14181d">111%</div>
<div style="left:1792px;top:782.5px;width:18px;text-align:center;font-size:10.5px;line-height:12px">1</div>
<div style="left:1881px;top:780px;width:20px;text-align:center;font-size:13px;line-height:16px;font-weight:bold">?</div>
</body></html>
